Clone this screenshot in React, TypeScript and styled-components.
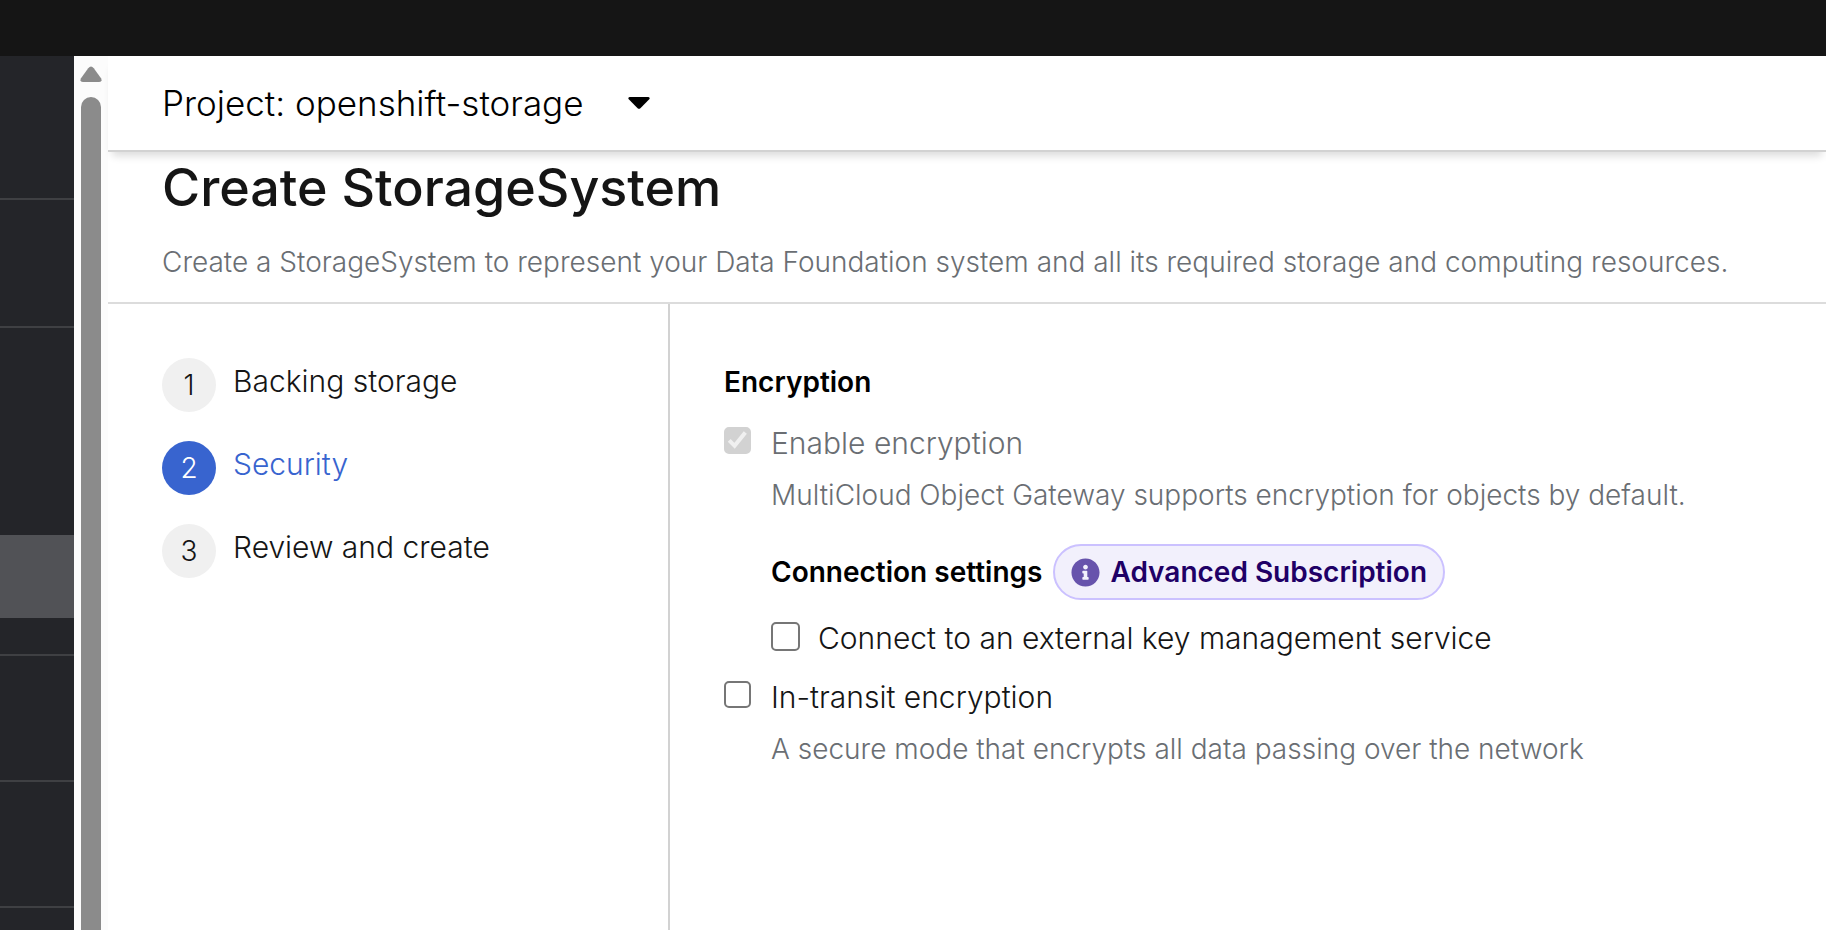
import React, { useState } from 'react';
import styled, { createGlobalStyle } from 'styled-components';

const GlobalStyle = createGlobalStyle`
  *, *::before, *::after { box-sizing: border-box; }
  body {
    margin: 0;
    background: #fff;
    color: #151515;
    font-family: Inter, "Liberation Sans", sans-serif;
    font-weight: 300;
  }
`;

const Page = styled.div`
  display: flex;
  flex-direction: column;
  height: 100vh;
  overflow: hidden;
`;

const Masthead = styled.header`
  flex: none;
  height: 56px;
  background: #151515;
`;

const Body = styled.div`
  display: flex;
  flex: 1;
  min-height: 0;
`;

const Sidebar = styled.nav`
  flex: none;
  width: 74px;
  overflow: hidden;
  background: #242529;
`;

const SidebarSection = styled.div<{ $height: number }>`
  display: flex;
  flex-direction: column;
  justify-content: flex-end;
  height: ${(p) => p.$height}px;
  padding-bottom: 36px;
  border-bottom: 2px solid #3f4043;
`;

const SidebarCurrent = styled.div`
  height: 83px;
  background: #515256;
`;

const ScrollTrack = styled.div`
  display: flex;
  flex: none;
  flex-direction: column;
  align-items: center;
  gap: 15px;
  width: 34px;
  padding-top: 10px;
  background: #fcfcfc;
`;

const ScrollThumb = styled.div`
  flex: 1;
  width: 20px;
  border-radius: 10px 10px 0 0;
  background: #8b8b8b;
`;

const Content = styled.main`
  display: flex;
  flex: 1;
  flex-direction: column;
  min-width: 0;
`;

const ProjectBar = styled.div`
  display: flex;
  align-items: center;
  height: 96px;
  padding: 0 54px;
  border-bottom: 2px solid #d2d2d2;
  box-shadow: 0 8px 8px -4px rgba(3, 3, 3, 0.14);
`;

const ProjectPicker = styled.div`
  display: grid;
  align-items: center;
  > * { grid-area: 1 / 1; }
  > svg {
    justify-self: end;
    pointer-events: none;
  }
`;

const ProjectSelect = styled.select`
  appearance: none;
  margin: 0;
  padding: 0 66px 0 0;
  border: 0;
  background: transparent;
  color: #000;
  font: inherit;
  font-size: 35px;
  line-height: 48px;
`;

const PageHeader = styled.div`
  padding: 0 54px 19px;
  border-bottom: 2px solid #dcdcdc;
`;

const Title = styled.h1`
  margin: 0 0 17px;
  font-size: 52px;
  font-weight: 500;
  line-height: 72px;
`;

const Description = styled.p`
  margin: 0;
  color: #6a6e73;
  font-size: 28px;
  line-height: 42px;
`;

const Wizard = styled.div`
  display: flex;
  flex: 1;
  min-height: 0;
`;

const Steps = styled.ol`
  display: flex;
  flex: none;
  flex-direction: column;
  gap: 29px;
  width: 562px;
  margin: 0;
  padding: 54px 54px 0;
  border-right: 2px solid #d2d2d2;
  list-style: none;
`;

const StepButton = styled.button<{ $current?: boolean }>`
  display: flex;
  align-items: flex-start;
  gap: 17px;
  padding: 0;
  border: 0;
  background: transparent;
  color: ${(p) => (p.$current ? '#3864cf' : '#151515')};
  font: inherit;
  font-size: 30px;
  line-height: 46px;
  text-align: left;
`;

const StepNumber = styled.span<{ $current?: boolean }>`
  width: 54px;
  height: 54px;
  border-radius: 50%;
  background: ${(p) => (p.$current ? '#3864cf' : '#f0f0f0')};
  color: ${(p) => (p.$current ? '#fff' : '#151515')};
  font-size: 28px;
  line-height: 54px;
  text-align: center;
`;

const StepBody = styled.form`
  flex: 1;
  min-width: 0;
  padding: 57px 54px 0;
`;

const SectionTitle = styled.h2`
  margin: 0;
  color: #000;
  font-size: 28px;
  font-weight: 600;
  line-height: 42px;
`;

const Field = styled.div<{ $top: number; $gap: number }>`
  display: flex;
  gap: ${(p) => p.$gap}px;
  margin-top: ${(p) => p.$top}px;
`;

const FieldText = styled.div`
  display: flex;
  flex: 1;
  flex-direction: column;
  align-items: flex-start;
  gap: 8px;
`;

const FieldLabel = styled.label<{ $disabled?: boolean }>`
  color: ${(p) => (p.$disabled ? '#6a6e73' : '#151515')};
  font-size: 30px;
  line-height: 46px;
`;

const BoxWrap = styled.span<{ $size: number }>`
  display: grid;
  flex: none;
  align-self: flex-start;
  width: ${(p) => p.$size}px;
  height: ${(p) => p.$size}px;
  margin-top: 7px;
  > * { grid-area: 1 / 1; }
  > svg { pointer-events: none; }
`;

const Box = styled.input`
  appearance: none;
  width: 100%;
  height: 100%;
  margin: 0;
  border: 2px solid #767676;
  border-radius: 5px;
  background: #fff;
  &:checked { border-color: #3864cf; background: #3864cf; }
  &:disabled { border-color: #d2d2d2; background: #d2d2d2; }
`;

const Nested = styled.div`
  padding-left: 47px;
`;

const ConnectionRow = styled.div`
  display: flex;
  align-items: center;
  gap: 11px;
  margin-top: 28px;
`;

const Badge = styled.span`
  display: flex;
  align-items: center;
  gap: 10px;
  height: 56px;
  padding: 0 16px;
  border: 2px solid #cbc1ff;
  border-radius: 28px;
  background: #f2f0fc;
  color: #1f0066;
  font-size: 28px;
  font-weight: 600;
  line-height: 42px;
`;

const InfoIcon = () => (
  <svg width="29" height="29" viewBox="0 0 512 512" fill="#6753ac" aria-hidden="true">
    <path d="M256 8C119.043 8 8 119.083 8 256c0 136.997 111.043 248 248 248s248-111.003 248-248C504 119.083 392.957 8 256 8zm0 110c23.196 0 42 18.804 42 42s-18.804 42-42 42-42-18.804-42-42 18.804-42 42-42zm56 254c0 6.627-5.373 12-12 12h-88c-6.627 0-12-5.373-12-12v-24c0-6.627 5.373-12 12-12h12v-64h-12c-6.627 0-12-5.373-12-12v-24c0-6.627 5.373-12 12-12h64c6.627 0 12 5.373 12 12v100h12c6.627 0 12 5.373 12 12v24z" />
  </svg>
);

type CheckboxProps = {
  id: string;
  checked: boolean;
  disabled?: boolean;
  size?: number;
  onChange?: (checked: boolean) => void;
};

const Checkbox = ({ id, checked, disabled, size = 27, onChange }: CheckboxProps) => (
  <BoxWrap $size={size}>
    <Box
      type="checkbox"
      id={id}
      checked={checked}
      disabled={disabled}
      onChange={(e) => onChange?.(e.target.checked)}
    />
    {checked && (
      <svg width={size} height={size} viewBox="0 0 27 27" fill="none" aria-hidden="true">
        <path d="M5.2 13.4 10.6 18.8 21.3 5.4" stroke="#f0f0f0" strokeWidth="4" />
      </svg>
    )}
  </BoxWrap>
);

const steps = ['Backing storage', 'Security', 'Review and create'];

export default function App() {
  const [current, setCurrent] = useState(1);
  const [external, setExternal] = useState(false);
  const [inTransit, setInTransit] = useState(false);

  return (
    <Page>
      <GlobalStyle />
      <Masthead />
      <Body>
        <Sidebar aria-label="Main">
          <SidebarSection $height={144} />
          <SidebarSection $height={128} />
          <SidebarSection $height={328}>
            <SidebarCurrent />
          </SidebarSection>
          <SidebarSection $height={126} />
          <SidebarSection $height={126} />
        </Sidebar>
        <ScrollTrack aria-hidden="true">
          <svg width="22" height="16" viewBox="0 0 22 16" fill="#8b8b8b">
            <path d="M8.2 2.2Q11-1.4 13.8 2.2L21 12.2Q22.6 16 19.2 16H2.8Q-.6 16 1 12.2Z" />
          </svg>
          <ScrollThumb />
        </ScrollTrack>
        <Content>
          <ProjectBar>
            <ProjectPicker>
              <ProjectSelect aria-label="Project">
                <option>Project: openshift-storage</option>
              </ProjectSelect>
              <svg width="22" height="13" viewBox="0 0 22 13" aria-hidden="true">
                <path d="M1.6 0H20.4Q22.6.8 21 2.6L12.4 11.2Q11 12.4 9.6 11.2L1 2.6Q-.6.8 1.6 0Z" />
              </svg>
            </ProjectPicker>
          </ProjectBar>
          <PageHeader>
            <Title>Create StorageSystem</Title>
            <Description>
              Create a StorageSystem to represent your Data Foundation system and all its required
              storage and computing resources.
            </Description>
          </PageHeader>
          <Wizard>
            <Steps>
              {steps.map((name, i) => (
                <li key={name}>
                  <StepButton type="button" $current={i === current} onClick={() => setCurrent(i)}>
                    <StepNumber $current={i === current}>{i + 1}</StepNumber>
                    {name}
                  </StepButton>
                </li>
              ))}
            </Steps>
            <StepBody>
              <SectionTitle>Encryption</SectionTitle>
              <Field $top={17} $gap={20}>
                <Checkbox id="enable-encryption" checked disabled />
                <FieldText>
                  <FieldLabel htmlFor="enable-encryption" $disabled>
                    Enable encryption
                  </FieldLabel>
                  <Description>
                    MultiCloud Object Gateway supports encryption for objects by default.
                  </Description>
                </FieldText>
              </Field>
              <Nested>
                <ConnectionRow>
                  <SectionTitle>Connection settings</SectionTitle>
                  <Badge>
                    <InfoIcon />
                    Advanced Subscription
                  </Badge>
                </ConnectionRow>
                <Field $top={15} $gap={18}>
                  <Checkbox id="external-kms" size={29} checked={external} onChange={setExternal} />
                  <FieldLabel htmlFor="external-kms">
                    Connect to an external key management service
                  </FieldLabel>
                </Field>
              </Nested>
              <Field $top={13} $gap={20}>
                <Checkbox id="in-transit" checked={inTransit} onChange={setInTransit} />
                <FieldText>
                  <FieldLabel htmlFor="in-transit">In-transit encryption</FieldLabel>
                  <Description>
                    A secure mode that encrypts all data passing over the network
                  </Description>
                </FieldText>
              </Field>
            </StepBody>
          </Wizard>
        </Content>
      </Body>
    </Page>
  );
}
